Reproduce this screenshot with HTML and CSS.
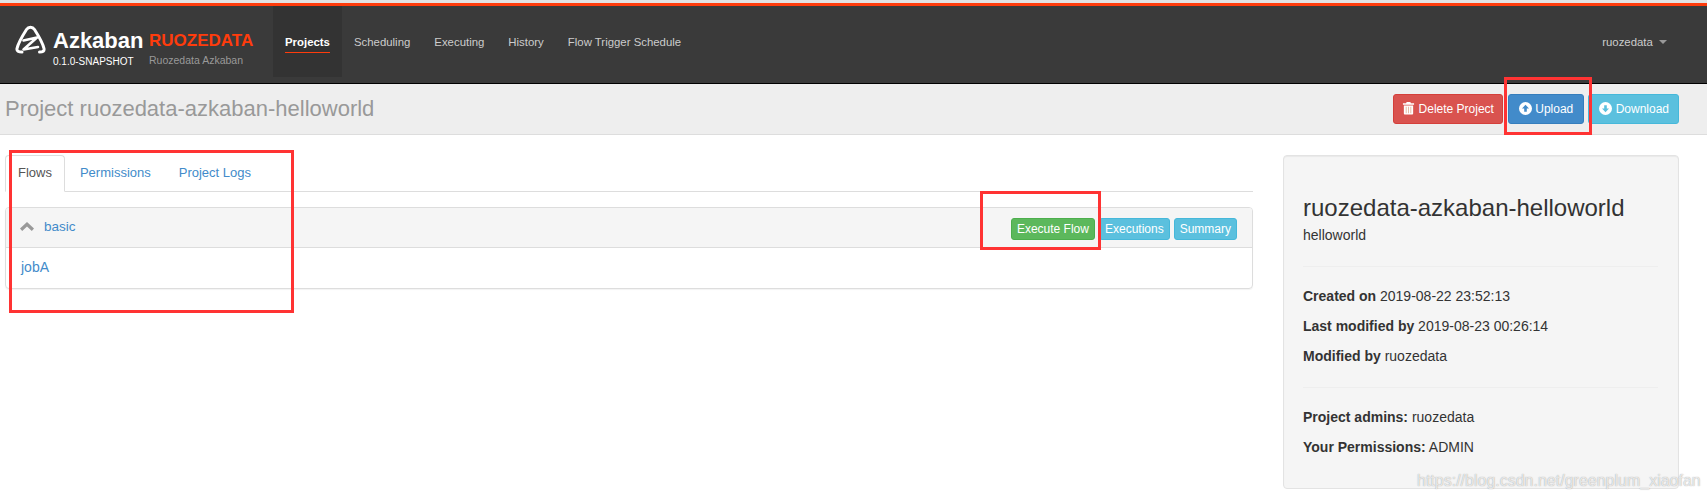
FILE: index.html
```html
<!DOCTYPE html>
<html lang="en">
<head>
    <meta charset="UTF-8">
    <meta name="viewport" content="width=device-width, initial-scale=1.0">
    <title>Project ruozedata-azkaban-helloworld</title>
    <link rel="stylesheet" href="styles.css">
</head>
<body>
    <div class="navbar">
        <div class="brand">
            <svg class="logo" viewBox="0 0 31 29" width="31" height="29">
                <path d="M7 27 C3.5 27 1.5 26 2 23.5 C3 19 8 10 11.5 4.5 C13.5 1.5 17.5 1.5 19.5 4.5 C23 10 28 19 29 23.5 C29.5 26 28 27 24.5 27" fill="none" stroke="#fff" stroke-width="3" stroke-linecap="round"/>
                <path d="M8.5 15.5 L22 12.5 L8.5 24.5 L23 22" fill="none" stroke="#fff" stroke-width="2.6" stroke-linejoin="round" stroke-linecap="round"/>
            </svg>
            <div class="brand-name">
                <div class="azkaban">Azkaban</div>
                <div class="version">0.1.0-SNAPSHOT</div>
            </div>
            <div class="brand-env">
                <div class="env-name">RUOZEDATA</div>
                <div class="env-desc">Ruozedata Azkaban</div>
            </div>
        </div>
        <ul class="nav">
            <li class="active"><a href="#"><span>Projects</span></a></li>
            <li><a href="#"><span>Scheduling</span></a></li>
            <li><a href="#"><span>Executing</span></a></li>
            <li><a href="#"><span>History</span></a></li>
            <li><a href="#"><span>Flow Trigger Schedule</span></a></li>
        </ul>
        <a href="#" class="user">ruozedata <i class="caret"></i></a>
    </div>

    <div class="page-header">
        <h1>Project <span>ruozedata-azkaban-helloworld</span></h1>
        <div class="header-buttons">
            <a href="#" class="btn btn-danger">
                <svg class="icon" viewBox="0 0 14 14" width="13" height="14">
                    <path fill="#fff" d="M5 0.5h4l0.6 1.5H13v1.6H1V2h3.4z"/>
                    <path fill="#fff" d="M2 4.4h10V13a1 1 0 0 1-1 1H3a1 1 0 0 1-1-1z"/>
                    <path fill="#e5b9a0" d="M4 5.6h1v7H4zM6.5 5.6h1v7h-1zM9 5.6h1v7H9z"/>
                </svg>
                Delete Project
            </a>
            <a href="#" class="btn btn-primary">
                <svg class="icon" viewBox="0 0 14 14" width="13" height="13">
                    <path fill="#fff" fill-rule="evenodd" d="M7 0a7 7 0 1 1 0 14A7 7 0 0 1 7 0zM7 3 3.2 7H5.6v3.6h2.8V7h2.4z"/>
                </svg>
                Upload
            </a>
            <a href="#" class="btn btn-info btn-download">
                <svg class="icon" viewBox="0 0 14 14" width="13" height="13">
                    <path fill="#fff" fill-rule="evenodd" d="M7 0a7 7 0 1 1 0 14A7 7 0 0 1 7 0zM7 11 10.8 7H8.4V3.4H5.6V7H3.2z"/>
                </svg>
                Download
            </a>
        </div>
    </div>

    <div class="main">
        <div class="content">
            <ul class="tabs">
                <li class="active"><a href="#">Flows</a></li>
                <li><a href="#">Permissions</a></li>
                <li><a href="#">Project Logs</a></li>
            </ul>
            <div class="panel">
                <div class="panel-heading">
                    <svg class="chevron" viewBox="0 0 14 9" width="14" height="9">
                        <path fill="#999" d="M7 0 14 6.6 11.8 9 7 4.4 2.2 9 0 6.6z"/>
                    </svg>
                    <a href="#" class="flow-name">basic</a>
                    <div class="flow-buttons">
                        <a href="#" class="btn btn-xs btn-success">Execute Flow</a>
                        <a href="#" class="btn btn-xs btn-info">Executions</a>
                        <a href="#" class="btn btn-xs btn-info">Summary</a>
                    </div>
                </div>
                <div class="panel-body">
                    <a href="#">jobA</a>
                </div>
            </div>
        </div>

        <div class="well">
            <h3>ruozedata-azkaban-helloworld</h3>
            <p class="description">helloworld</p>
            <hr>
            <p><strong>Created on</strong> 2019-08-22 23:52:13</p>
            <p><strong>Last modified by</strong> 2019-08-23 00:26:14</p>
            <p><strong>Modified by</strong> ruozedata</p>
            <hr>
            <p><strong>Project admins:</strong> ruozedata</p>
            <p><strong>Your Permissions:</strong> ADMIN</p>
        </div>
    </div>

    <div class="mark mark-upload"></div>
    <div class="mark mark-tabs"></div>
    <div class="mark mark-execute"></div>
    <div class="watermark">https://blog.csdn.net/greenplum_xiaofan</div>
</body>
</html>
```

FILE: styles.css
```css
html, body {
    height: 499px;
    overflow: hidden;
}

body {
    font-family: "Liberation Sans", Arial, sans-serif;
    font-size: 14px;
    line-height: 20px;
    color: #333;
    margin: 0;
    box-sizing: border-box;
    background-color: #fff;
    border-top: 3px solid #e2e2e2;
}

a {
    color: #428bca;
    text-decoration: none;
}

.navbar {
    display: flex;
    height: 77px;
    background-color: #3a3a3a;
    border-top: 3px solid #ff3c0c;
    border-bottom: 1px solid #000;
}

.brand {
    display: flex;
    width: 273px;
    padding: 19px 0 0 15px;
    box-sizing: border-box;
}

.logo {
    margin: 0 7px 0 0;
    flex: none;
}

.brand-name {
    width: 96px;
    flex: none;
}

.azkaban {
    color: #fff;
    font-size: 22px;
    font-weight: bold;
    line-height: 28px;
    margin-top: 2px;
}

.version {
    color: #fff;
    font-size: 10px;
    line-height: 14px;
}

.env-name {
    color: #ff3c0c;
    font-size: 17px;
    font-weight: bold;
    line-height: 28px;
    margin-top: 2px;
}

.env-desc {
    color: #999;
    font-size: 10.5px;
    line-height: 14px;
    margin-top: -2px;
}

.nav {
    display: flex;
    list-style-type: none;
    margin: 0;
    padding: 0;
    height: 71px;
}

.nav li a {
    display: block;
    height: 71px;
    padding: 28px 12px 0;
    box-sizing: border-box;
    color: #ccc;
    font-size: 11.4px;
    line-height: 16px;
}

.nav li a span {
    display: block;
    padding-bottom: 2px;
}

.nav li.active a {
    background-color: #333;
    color: #fff;
    font-weight: bold;
}

.nav li.active a span {
    border-bottom: 1px solid #ff3c0c;
}

.user {
    margin-left: auto;
    padding: 28px 40px 0 0;
    color: #ccc;
    font-size: 11.4px;
    line-height: 16px;
}

.caret {
    display: inline-block;
    margin: 0 0 2px 3px;
    border-top: 4px solid #999;
    border-left: 4px solid transparent;
    border-right: 4px solid transparent;
}

.page-header {
    display: flex;
    align-items: center;
    justify-content: space-between;
    height: 50px;
    padding: 0 28px 0 5px;
    background-color: #eee;
    border-bottom: 1px solid #ddd;
}

.page-header h1 {
    margin: 0;
    color: #999;
    font-size: 22px;
    font-weight: normal;
    line-height: 30px;
}

.header-buttons {
    display: flex;
    gap: 4px;
}

.btn {
    display: inline-block;
    height: 30px;
    padding: 0 10px;
    box-sizing: border-box;
    border: 1px solid transparent;
    border-radius: 3px;
    color: #fff;
    font-size: 12px;
    line-height: 28px;
    white-space: nowrap;
}

.icon {
    vertical-align: -2px;
}

.btn-danger {
    padding: 0 8px;
    background-color: #d9534f;
    border-color: #d43f3a;
}

.btn-primary {
    margin-left: 1px;
    background-color: #428bca;
    border-color: #357ebd;
}

.btn-info {
    background-color: #5bc0de;
    border-color: #46b8da;
}

.btn-download {
    padding: 0 9px 0 10px;
}

.btn-success {
    background-color: #5cb85c;
    border-color: #4cae4c;
}

.btn-xs {
    height: 22px;
    padding: 0 5px;
    line-height: 20px;
}

.main {
    display: flex;
    padding: 20px 28px 0 5px;
}

.content {
    width: 1248px;
    flex: none;
}

.tabs {
    display: flex;
    gap: 2px;
    list-style-type: none;
    margin: 0;
    padding: 0;
    height: 36px;
    border-bottom: 1px solid #ddd;
}

.tabs li a {
    display: block;
    height: 37px;
    padding: 7px 12px 0;
    box-sizing: border-box;
    border: 1px solid transparent;
    border-radius: 4px 4px 0 0;
    font-size: 13px;
}

.tabs li.active a {
    color: #555;
    background-color: #fff;
    border-color: #ddd #ddd #fff;
}

.panel {
    margin-top: 15px;
    height: 82px;
    box-sizing: border-box;
    border: 1px solid #ddd;
    border-radius: 4px;
    box-shadow: 0 1px 1px rgba(0, 0, 0, 0.05);
}

.panel-heading {
    display: flex;
    align-items: center;
    height: 39px;
    padding: 0 15px 0 14px;
    background-color: #f5f5f5;
    border-bottom: 1px solid #ddd;
    border-radius: 3px 3px 0 0;
}

.chevron {
    margin: 0 10px 2px 0;
}

.flow-name {
    font-size: 13.5px;
    margin-bottom: 1px;
}

.flow-buttons {
    display: flex;
    gap: 4px;
    margin: 3px 0 0 auto;
}

.panel-body {
    padding: 9px 15px;
}

.well {
    width: 396px;
    height: 334px;
    margin-left: 30px;
    padding: 39px 20px 0 19px;
    box-sizing: border-box;
    background-color: #f5f5f5;
    border: 1px solid #e3e3e3;
    border-radius: 4px;
    box-shadow: inset 0 1px 1px rgba(0, 0, 0, 0.05);
    flex: none;
}

.well h3 {
    margin: 0;
    font-size: 24px;
    font-weight: normal;
    line-height: 26px;
}

.well p {
    margin: 0 0 10px;
}

.well .description {
    margin: 4px 0 0;
}

.well hr {
    margin: 21px 0 19px;
    border: 0;
    border-top: 1px solid #eee;
}

.mark {
    position: absolute;
    box-sizing: border-box;
    border: 3px solid #ff3333;
}

.mark-upload {
    left: 1504px;
    top: 77px;
    width: 88px;
    height: 58px;
}

.mark-tabs {
    left: 9px;
    top: 150px;
    width: 285px;
    height: 163px;
}

.mark-execute {
    left: 980px;
    top: 191px;
    width: 121px;
    height: 59px;
}

.watermark {
    position: absolute;
    left: 1417px;
    top: 471px;
    color: rgba(255, 255, 255, 0.75);
    font-size: 16px;
    line-height: 20px;
    text-shadow: 0 0 1px rgba(120, 120, 120, 0.8);
    white-space: nowrap;
}
```
